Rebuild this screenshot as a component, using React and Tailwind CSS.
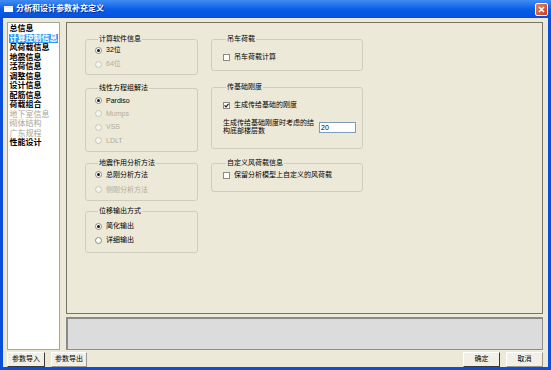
import React from "react";

const F = "font-['Liberation_Sans','Noto_Sans_CJK_SC',sans-serif]";

function Radio({ label, checked, disabled }) {
  return (
    <div className="flex items-center h-full">
      <div
        className={`w-[7px] h-[7px] rounded-full border flex items-center justify-center ${
          disabled ? "border-[#c9c7ba] bg-[#f5f4ee]" : "border-[#8d8b80] bg-white"
        }`}
      >
        {checked && <div className="w-[3px] h-[3px] rounded-full bg-[#1a1a1a]" />}
      </div>
      <span className={`ml-[4px] text-[7px] leading-[8px] ${disabled ? "text-[#b0ad9f]" : "text-black"}`}>
        {label}
      </span>
    </div>
  );
}

function Check({ label, checked }) {
  return (
    <div className="flex items-center h-full">
      <div className="w-[7px] h-[7px] border border-[#8d8b80] bg-white flex items-center justify-center">
        {checked && (
          <svg width="5" height="5" viewBox="0 0 5 5">
            <path d="M0.5 2.3 L2 3.8 L4.6 0.8" stroke="#1a1a1a" strokeWidth="1.2" fill="none" />
          </svg>
        )}
      </div>
      <span className="ml-[4px] text-[7px] leading-[8px] text-black whitespace-nowrap">{label}</span>
    </div>
  );
}

function Group({ title, className, children }) {
  return (
    <fieldset className={`border border-[#cfcdbf] rounded-[3px] min-w-0 ${className}`}>
      <legend className="ml-[3px] px-[1px] text-[7px] leading-[8px] text-black whitespace-nowrap">{title}</legend>
      {children}
    </fieldset>
  );
}

function Btn({ children, className, strong }) {
  return (
    <div
      className={`h-[15px] flex items-center justify-center text-[7px] text-black bg-[#f1efe6] border ${
        strong
          ? "border-t-[#ffffff] border-l-[#ffffff] border-r-[#3a3a3a] border-b-[#3a3a3a]"
          : "border-t-[#ffffff] border-l-[#ffffff] border-r-[#9a988c] border-b-[#9a988c]"
      } ${className}`}
    >
      {children}
    </div>
  );
}

const items = [
  { t: "总信息" },
  { t: "计算控制信息", sel: true },
  { t: "风荷载信息" },
  { t: "地震信息" },
  { t: "活荷信息" },
  { t: "调整信息" },
  { t: "设计信息" },
  { t: "配筋信息" },
  { t: "荷载组合" },
  { t: "地下室信息", dis: true },
  { t: "砌体结构", dis: true },
  { t: "广东规程", dis: true },
  { t: "性能设计" },
];

export default function App() {
  return (
    <div className={`w-[551px] h-[370px] flex flex-col bg-[#0a4fdc] ${F}`}>
      {/* title bar */}
      <div className="h-[18px] flex items-center bg-gradient-to-b from-[#3f8cf3] via-[#0a5ee9] to-[#0550dc] px-[4px]">
        <div className="w-[9px] h-[6px] bg-white border-t-2 border-[#e8eefc]" />
        <span className="ml-[3px] text-[8px] leading-[10px] font-bold text-white [text-shadow:1px_1px_0_#0a2a8a]">
          分析和设计参数补充定义
        </span>
        <div className="ml-auto mr-[-1px] w-[13px] h-[13px] rounded-[2px] border border-white bg-gradient-to-br from-[#e8845e] to-[#c4391b] flex items-center justify-center">
          <svg width="7" height="7" viewBox="0 0 7 7">
            <path d="M1 1 L6 6 M6 1 L1 6" stroke="white" strokeWidth="1.5" />
          </svg>
        </div>
      </div>

      {/* body */}
      <div className="flex-1 mx-[3px] mb-[3px] bg-[#ece9d8] flex flex-col pt-[4px] pl-[4px] pr-[5px]">
        <div className="flex gap-[6px] h-[328px]">
          {/* list box */}
          <div className="w-[53px] h-full bg-white border border-[#a7a598] pt-[1px] pl-[1px] flex flex-col">
            {items.map((it) => (
              <div key={it.t} className="h-[9.5px] flex items-center">
                <span
                  className={`text-[8px] leading-[9px] whitespace-nowrap px-[0.5px] ${
                    it.sel ? "bg-[#3797f5] text-white font-bold" : it.dis ? "text-[#a8a698]" : "text-black font-bold"
                  }`}
                >
                  {it.t}
                </span>
              </div>
            ))}
          </div>

          {/* right column */}
          <div className="flex-1 flex flex-col gap-[3px]">
            <div className="h-[292px] border border-[#77756a] bg-[#ece9d8] flex pl-[18px] gap-[13px]">
              {/* left groups */}
              <div className="w-[113px] flex flex-col pt-[12px]">
                <Group title="计算软件信息" className="h-[40px] pl-[9px]">
                  <div className="h-[14px]"><Radio label="32位" checked /></div>
                  <div className="h-[14px]"><Radio label="64位" disabled /></div>
                </Group>
                <Group title="线性方程组解法" className="h-[68px] mt-[9px] pl-[9px] pt-[2px]">
                  <div className="h-[13.3px]"><Radio label="Pardiso" checked /></div>
                  <div className="h-[13.3px]"><Radio label="Mumps" disabled /></div>
                  <div className="h-[13.3px]"><Radio label="VSS" disabled /></div>
                  <div className="h-[13.3px]"><Radio label="LDLT" disabled /></div>
                </Group>
                <Group title="地震作用分析方法" className="h-[42px] mt-[7px] pl-[9px]">
                  <div className="h-[15px]"><Radio label="总刚分析方法" checked /></div>
                  <div className="h-[15px]"><Radio label="侧刚分析方法" disabled /></div>
                </Group>
                <Group title="位移输出方式" className="h-[46px] mt-[6px] pl-[9px] pt-[4px]">
                  <div className="h-[14px]"><Radio label="简化输出" checked /></div>
                  <div className="h-[14px]"><Radio label="详细输出" /></div>
                </Group>
              </div>

              {/* right groups */}
              <div className="w-[152px] flex flex-col pt-[12px]">
                <Group title="吊车荷载" className="h-[36px] pl-[11px] pt-[7px]">
                  <div className="h-[14px]"><Check label="吊车荷载计算" /></div>
                </Group>
                <Group title="传基础刚度" className="h-[66px] mt-[12px] pl-[11px] pt-[7px]">
                  <div className="h-[14px]"><Check label="生成传给基础的刚度" checked /></div>
                  <div className="mt-[7px] flex items-center">
                    <div className="text-[7px] leading-[8px] text-black whitespace-nowrap w-[96px]">
                      生成传给基础刚度时考虑的结
                      <br />
                      构底部楼层数
                    </div>
                    <div className="w-[37px] h-[11px] border border-[#7f9db9] bg-white text-[7px] leading-[9px] pl-[1px] text-black">
                      20
                    </div>
                  </div>
                </Group>
                <Group title="自定义风荷载信息" className="h-[33px] mt-[10px] pl-[11px] pt-[1px]">
                  <div className="h-[14px]"><Check label="保留分析模型上自定义的风荷载" /></div>
                </Group>
              </div>
            </div>
            <div className="h-[33px] bg-[#dcdcdc] border border-[#8e8e8e] border-t-2 border-l-2 border-t-[#8a8a8a] border-l-[#8a8a8a]" />
          </div>
        </div>

        {/* buttons */}
        <div className="flex mt-[2px] h-[15px]">
          <Btn className="w-[38px]" strong>参数导入</Btn>
          <Btn className="w-[36px] ml-[6px]">参数导出</Btn>
          <Btn className="w-[37px] ml-auto" strong>确定</Btn>
          <Btn className="w-[37px] ml-[6px]">取消</Btn>
        </div>
      </div>
    </div>
  );
}
